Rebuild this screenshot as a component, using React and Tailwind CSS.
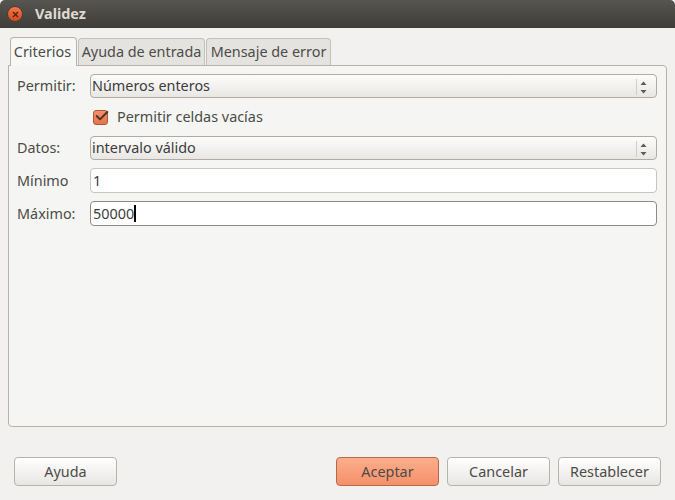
import { Check } from 'lucide-react';

const font = "font-['Noto_Sans','Open_Sans',sans-serif]";

const Spinner = () => (
  <div className="flex items-center w-[20px] h-[16px] mb-[-1px] border-l border-[#d0cdc8] shrink-0">
    <svg width="19" height="18" viewBox="0 0 19 18" className="block">
      <path d="M3.5 7 6.5 3.5 9.5 7Z" fill="#5a5a56" />
      <path d="M3.5 12 6.5 15.5 9.5 12Z" fill="#5a5a56" />
    </svg>
  </div>
);

const Select = ({ value }) => (
  <div className="flex items-center justify-between w-[567px] h-[24px] pl-[1px] rounded-[4px] border border-[#b0aca5] bg-gradient-to-b from-[#fcfcfb] to-[#e9e7e4]">
    <span>{value}</span>
    <Spinner />
  </div>
);

const Row = ({ label, children, className = '' }) => (
  <div className={`flex items-center ${className}`}>
    <span className="w-[73px] shrink-0 text-[#4c4c47]">{label}</span>
    {children}
  </div>
);

const Button = ({ children, primary = false }) => (
  <button
    className={`w-[103px] h-[29px] rounded-[4px] border text-[#4c4c47] ${
      primary
        ? 'border-[#b5694a] bg-gradient-to-b from-[#fdae8c] to-[#f4906a]'
        : 'border-[#b7b3ac] bg-gradient-to-b from-[#ffffff] to-[#e8e6e3]'
    }`}
  >
    {children}
  </button>
);

export default function App() {
  return (
    <div className={`${font} w-[675px] h-[500px] flex flex-col bg-[#f2f1f0] text-[14.4px] leading-[20px] text-[#3c3c3c] overflow-hidden`}>
      {/* Title bar */}
      <div className="flex items-center h-[28px] shrink-0 pl-[7px] rounded-t-[5px] bg-gradient-to-b from-[#565550] to-[#3e3d39]">
        <div className="flex items-center justify-center w-[16px] h-[16px] rounded-full bg-gradient-to-b from-[#f4784a] to-[#d9471c] border border-[#45403a]">
          <svg width="7" height="7" viewBox="0 0 7 7">
            <path d="M1 1 6 6M6 1 1 6" stroke="#4a2214" strokeWidth="1.3" />
          </svg>
        </div>
        <span className="ml-[12px] font-bold text-[#dfdbd2]">Validez</span>
      </div>

      {/* Tabs */}
      <div className="flex items-end h-[37px] shrink-0 pl-[10px] gap-[1px] relative z-10">
        <div className="flex items-center justify-center w-[67px] h-[29px] -mb-[1px] pr-[2px] rounded-t-[4px] border border-b-0 border-[#b7b3ac] bg-[#f7f7f6] text-[#4c4c47]">
          Criterios
        </div>
        <div className="flex items-center justify-center w-[127px] h-[27px] rounded-t-[4px] border border-b-0 border-[#c4c0ba] bg-[#e5e3e0] text-[#4c4c47]">
          Ayuda de entrada
        </div>
        <div className="flex items-center justify-center w-[125px] h-[27px] rounded-t-[4px] border border-b-0 border-[#c4c0ba] bg-[#e5e3e0] text-[#4c4c47]">
          Mensaje de error
        </div>
      </div>

      {/* Panel */}
      <div className="mx-[8px] w-[659px] h-[362px] shrink-0 rounded-b-[4px] rounded-tr-[4px] border border-[#b7b3ac] bg-[#f5f5f4] pl-[8px] pt-[8px]">
        <Row label="Permitir:">
          <Select value="Números enteros" />
        </Row>
        <div className="flex items-center h-[20px] mt-[9px] pl-[76px]">
          <div className="flex items-center justify-center w-[15px] h-[15px] rounded-[3px] border border-[#a95a3b] bg-gradient-to-b from-[#f4906a] to-[#e9744a] overflow-visible">
            <Check size={16} strokeWidth={3} color="#4f3329" className="shrink-0 ml-[2px] -mt-[2px]" />
          </div>
          <span className="ml-[9px] text-[#4c4c47]">Permitir celdas vacías</span>
        </div>
        <Row label="Datos:" className="mt-[9px]">
          <Select value="intervalo válido" />
        </Row>
        <Row label="Mínimo" className="mt-[8px]">
          <div className="flex items-center w-[567px] h-[25px] pl-[2px] rounded-[4px] border border-[#c8c4be] bg-white">1</div>
        </Row>
        <Row label="Máximo:" className="mt-[8px]">
          <div className="flex items-center w-[567px] h-[25px] pl-[2px] rounded-[4px] border border-[#8f8b84] bg-white">
            50000
            <span className="w-[2px] h-[17px] bg-black" />
          </div>
        </Row>
      </div>

      {/* Footer */}
      <div className="flex items-center mt-[30px] pl-[14px]">
        <Button>Ayuda</Button>
        <div className="flex gap-[8px] ml-[219px]">
          <Button primary>Aceptar</Button>
          <Button>Cancelar</Button>
          <Button>Restablecer</Button>
        </div>
      </div>
    </div>
  );
}
